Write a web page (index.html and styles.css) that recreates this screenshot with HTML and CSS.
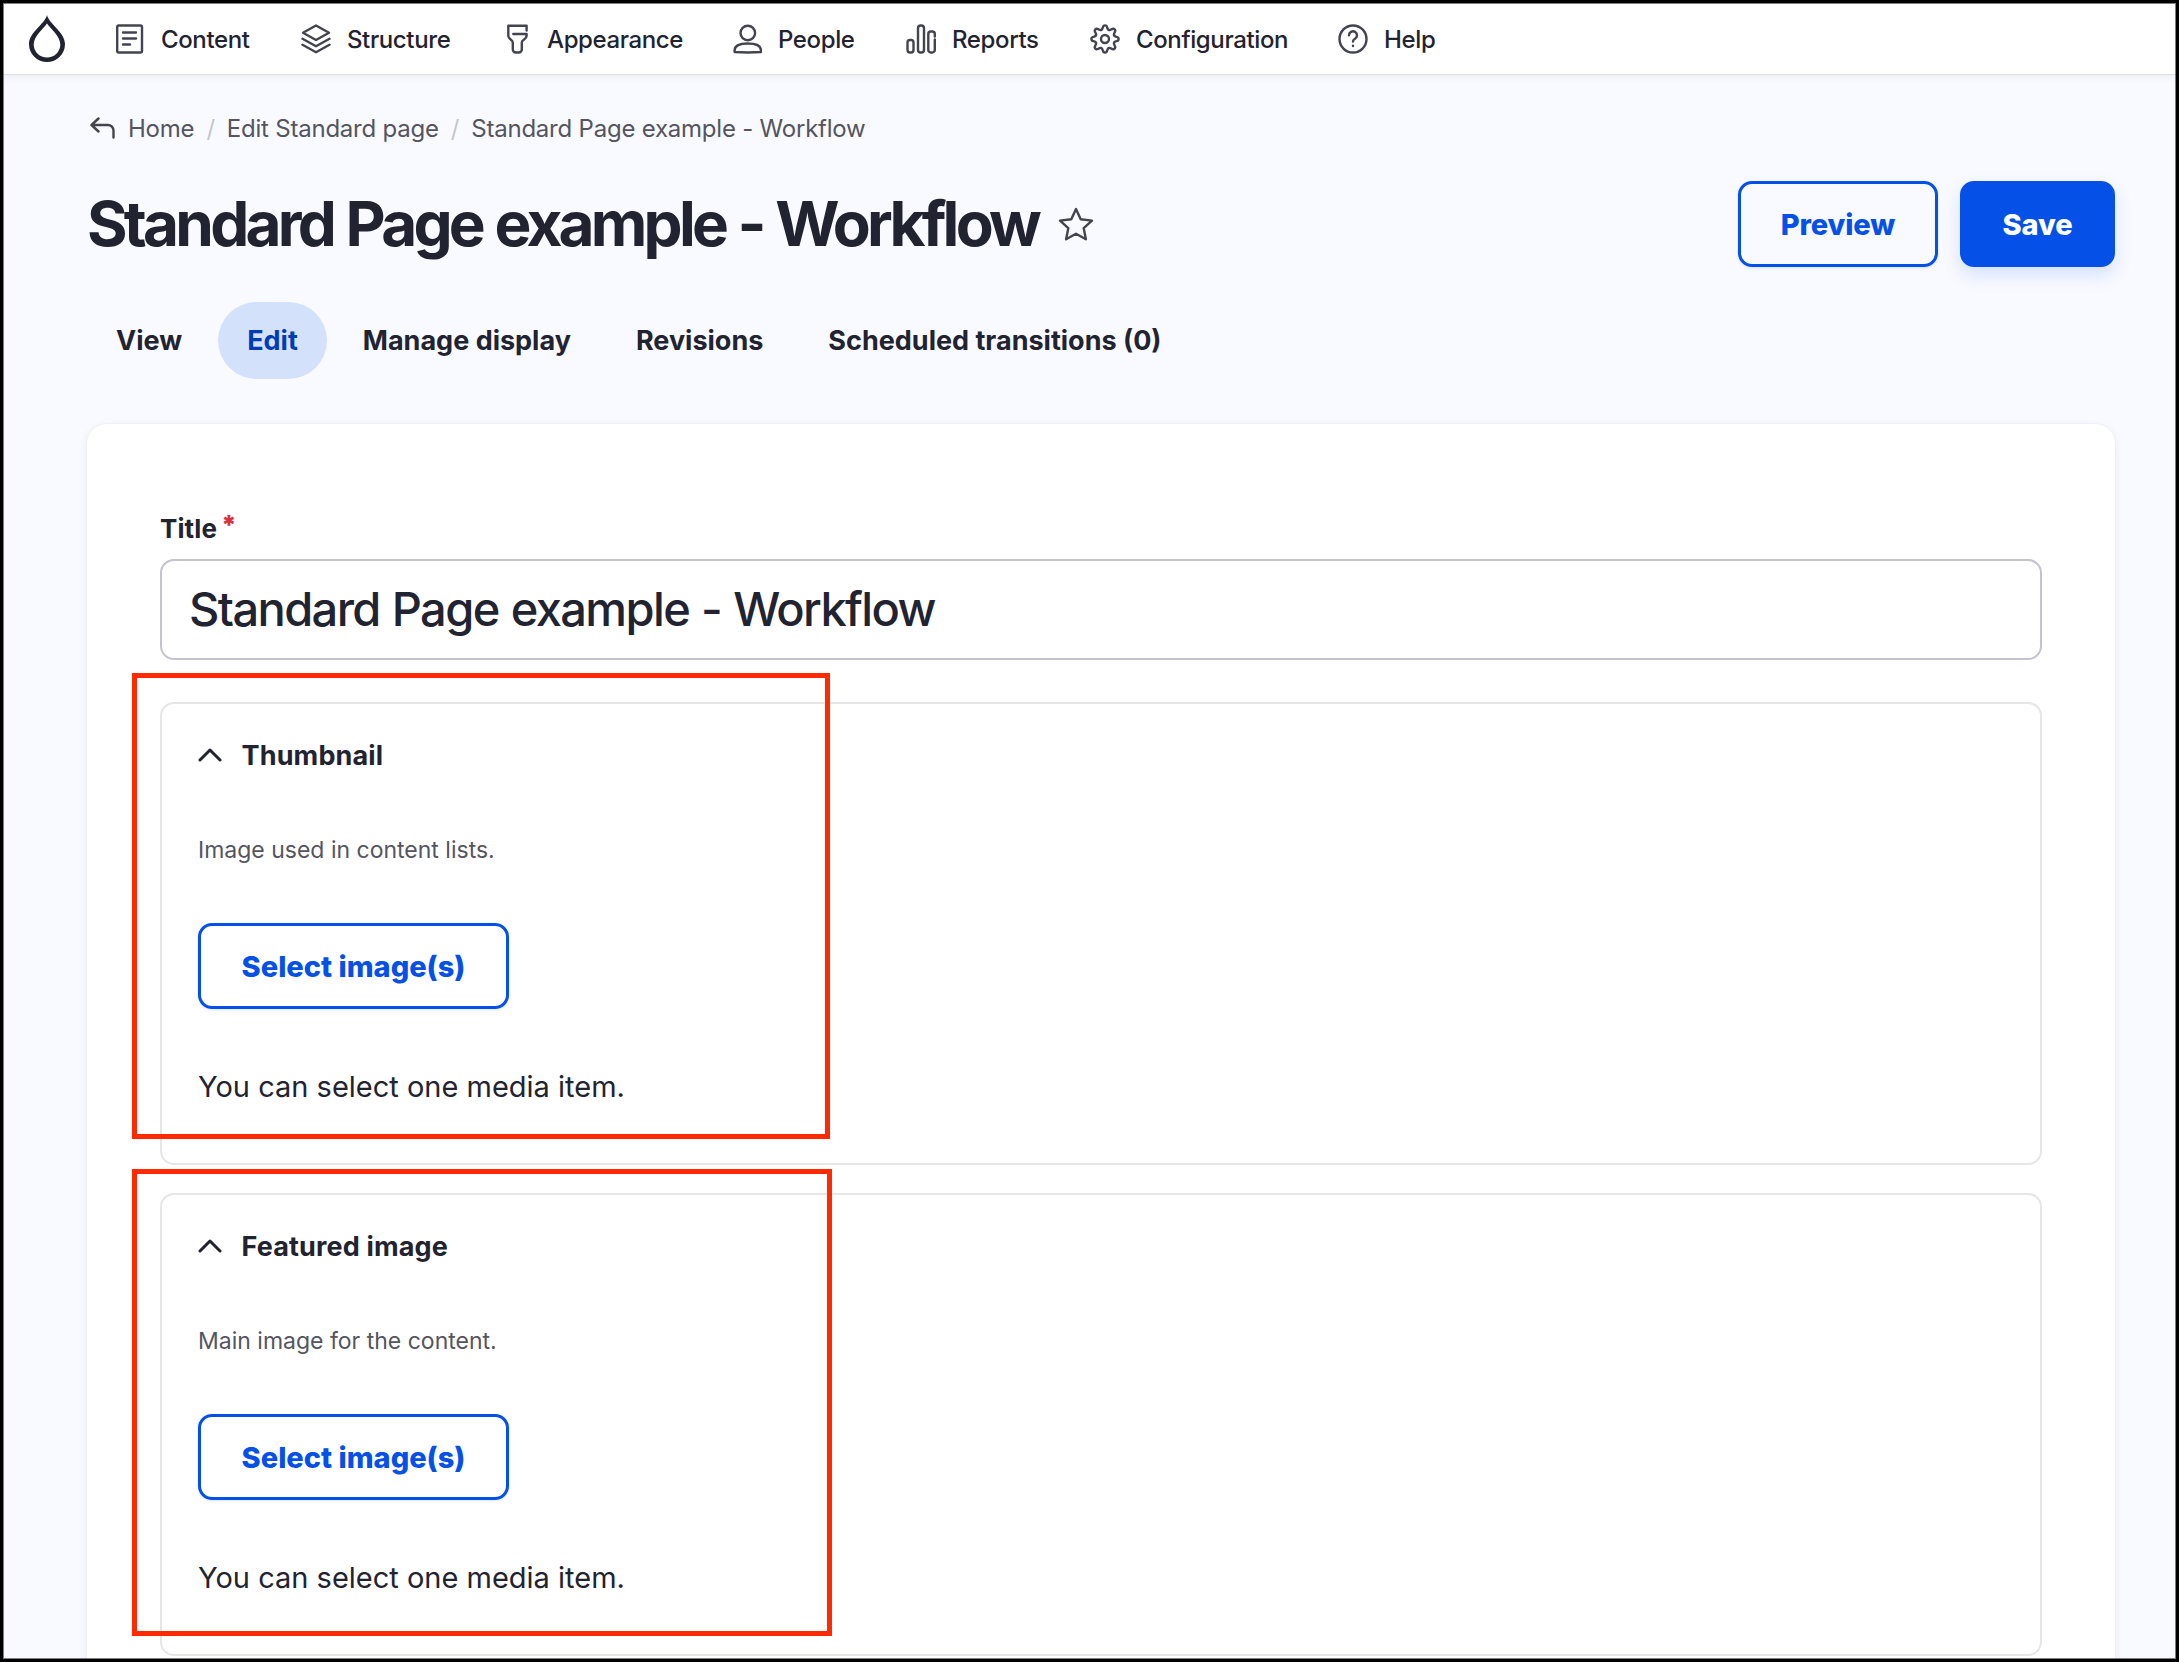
FILE: index.html
```
<!DOCTYPE html>
<html lang="en">
<head>
<meta charset="utf-8">
<title>Edit Standard page</title>
<link rel="stylesheet" href="styles.css">
</head>
<body>
<div class="frame">
  <nav class="toolbar">
    <a class="logo"><svg width="40" height="50" viewBox="0 0 40 50"><path fill-rule="evenodd" d="M19 0C17 9 1 17 1 29a18 18 0 0 0 36 0C37 17 21 9 19 0ZM19 8.500c4 6 13.300 12.500 13.300 21a13.300 13 0 0 1-26.600 0C5.700 21 15 14.500 19 8.500Z" fill="#222330"/></svg></a>
    <a class="tool t1"><svg class="ico" viewBox="0 0 30 30"><rect x="2.200" y="1.500" width="24.800" height="27" rx="1.500"/><path d="M8 8.500h13M8 14.500h13M8 20.500h7"/></svg><span>Content</span></a>
    <a class="tool t2"><svg class="ico" viewBox="0 0 30 30"><path d="M15 1.500 28 8.800 15 16 2 8.800Z"/><path d="M1.500 14.800 15 22.300 28.500 14.800M1.500 20.800 15 28.300 28.500 20.800"/></svg><span>Structure</span></a>
    <a class="tool t3"><svg class="ico" viewBox="-1.300 0 30 30"><path d="M24.300 6.500V1.800H6V12c0 3.500 4.500 3.500 4.500 6.500v7a3 3 0 0 0 3 3h3a3 3 0 0 0 3-3v-7c0-3 4.800-3 4.800-6.500V10H11"/></svg><span>Appearance</span></a>
    <a class="tool t4"><svg class="ico" viewBox="-0.800 0 30 30"><circle cx="15" cy="9" r="7.300"/><path d="M1.800 28v-1.500c0-4.500 4-7 13.200-7s13.200 2.500 13.200 7V28C20 28.600 10 28.600 1.800 28Z"/></svg><span>People</span></a>
    <a class="tool t5"><svg class="ico" viewBox="0 0 30 30"><rect x="1.500" y="16" width="6" height="12.500" rx="2.500"/><rect x="12" y="1.500" width="6" height="27" rx="2.700"/><path d="M28.800 12.500V10a2.500 2.500 0 0 0-2.500-2.500h-1.500A2.500 2.500 0 0 0 22.300 10v16a2.500 2.500 0 0 0 2.500 2.500h1.500a2.500 2.500 0 0 0 2.500-2.500V15.500"/></svg><span>Reports</span></a>
    <a class="tool t6"><svg class="ico" viewBox="-15 -15 30 30"><path id="tooth" d="M-3.750-9.050C-1.200-10.200-3.200-13.600 0-13.600S1.200-10.200 3.750-9.050"/><use href="#tooth" transform="rotate(45)"/><use href="#tooth" transform="rotate(90)"/><use href="#tooth" transform="rotate(135)"/><use href="#tooth" transform="rotate(180)"/><use href="#tooth" transform="rotate(225)"/><use href="#tooth" transform="rotate(270)"/><use href="#tooth" transform="rotate(315)"/><circle r="4"/></svg><span>Configuration</span></a>
    <a class="tool t7"><svg class="ico" viewBox="0 0 30 30"><circle cx="15" cy="15" r="13.500"/><path d="M11 11.300a4 4 0 1 1 6 3.500c-1.500.9-2 1.500-2 2.700M15 21.700v.4"/></svg><span>Help</span></a>
  </nav>
  <main class="main">
    <div class="crumbs">
      <svg class="back" viewBox="0 0 25 23"><path d="M8.500 1.500 1.500 8l7 6.500M1.500 8H18a5.500 5.500 0 0 1 5.500 5.500V20.500"/></svg>
      <span>Home</span><i>/</i><span>Edit Standard page</span><i>/</i><span>Standard Page example - Workflow</span>
    </div>
    <header class="head">
      <h1>Standard Page example - Workflow</h1>
      <svg class="star" viewBox="0 0 36 34"><path d="m18 2 4.700 10.300 11.300 1.300-8.300 7.600 2.200 11.100L18 26.700l-9.900 5.600 2.200-11.100L2 13.600l11.300-1.300Z"/></svg>
      <div class="actions"><a class="btn preview">Preview</a><a class="btn save">Save</a></div>
    </header>
    <nav class="tabs"><a>View</a><a class="on">Edit</a><a>Manage display</a><a>Revisions</a><a>Scheduled transitions (0)</a></nav>
    <section class="card">
      <label class="label"><span>Title</span><b>*</b></label>
      <div class="field"><span>Standard Page example - Workflow</span></div>
      <div class="group">
        <h2><svg class="chev" viewBox="0 0 24 14"><path d="M2 12 12 2l10 10"/></svg><span>Thumbnail</span></h2>
        <p class="desc">Image used in content lists.</p>
        <a class="btn select">Select image(s)</a>
        <p class="note">You can select one media item.</p>
        <div class="mark mark-a"></div>
      </div>
      <div class="group">
        <h2><svg class="chev" viewBox="0 0 24 14"><path d="M2 12 12 2l10 10"/></svg><span>Featured image</span></h2>
        <p class="desc">Main image for the content.</p>
        <a class="btn select">Select image(s)</a>
        <p class="note">You can select one media item.</p>
        <div class="mark mark-b"></div>
      </div>
    </section>
  </main>
</div>
</body>
</html>
```
FILE: styles.css
```
* { box-sizing: border-box; }
body { margin: 0; font-family: Inter, "Liberation Sans", sans-serif; color: #222330; }
h1, h2, p { margin: 0; }
span, h1, p, a { white-space: nowrap; }
.frame { position: relative; width: 2179px; height: 1662px; border: 3px solid #000; background: #f9faff; overflow: hidden; }
.frame::after { content: ""; position: absolute; inset: 0; border: 1px solid rgba(0, 0, 0, .5); pointer-events: none; }
.toolbar { height: 72px; display: flex; align-items: center; background: #fff; border-bottom: 1px solid #dfe0e4; box-shadow: 0 2px 8px rgba(0, 0, 20, .06); font-size: 24px; font-weight: 500; letter-spacing: -.38px; padding: 1px 0 0 25px; }
.logo { display: flex; width: 87px; padding-top: 1px; }
.tool { display: flex; align-items: center; gap: 16px; }
.t1 { width: 186px; }
.t2 { width: 200px; }
.t3 { width: 231px; }
.t4 { width: 174px; }
.t5 { width: 184px; }
.t6 { width: 248px; }
.ico { width: 30px; height: 30px; flex: none; }
.ico, .back, .star, .chev { fill: none; stroke: #43444f; stroke-width: 2.4; stroke-linecap: round; stroke-linejoin: round; }
.main { padding: 35px 61px 0 84px; }
.crumbs { display: flex; align-items: center; height: 36px; padding-left: 3px; font-size: 24px; letter-spacing: -.22px; color: #545560; }
.crumbs i { font-style: normal; color: #c5c6cc; margin: 0 12px; }
.back { width: 25px; height: 23px; margin-right: 13px; }
.head { display: flex; align-items: center; height: 86px; margin-top: 35px; }
h1 { font-size: 62px; font-weight: 700; letter-spacing: -3.75px; word-spacing: 1.5px; line-height: 80px; }
.star { width: 36px; height: 34px; margin-left: 20px; }
.actions { margin-left: auto; display: flex; gap: 22px; }
.btn { display: flex; align-items: center; justify-content: center; height: 86px; border: 3px solid #0550e6; border-radius: 14px; color: #0550e6; font-size: 29px; font-weight: 800; letter-spacing: -.15px; box-shadow: 0 1px 3px rgba(5, 80, 230, .15); }
.preview { width: 200px; }
.save { width: 155px; background: #0550e6; color: #fff; box-shadow: 0 8px 18px rgba(5, 80, 230, .15); }
.select { width: 311px; letter-spacing: 0; }
.tabs { display: flex; height: 77px; margin-top: 35px; gap: 6px; font-size: 27px; font-weight: 700; letter-spacing: 0; }
.tabs a { display: flex; align-items: center; padding: 0 29.5px; border-radius: 39px; }
.tabs a:first-child { padding-left: 29px; }
.tabs .on { background: #d4e1fb; color: #003cb4; }
.card { margin-top: 45px; height: 1300px; padding: 86px 73px 0; background: #fff; border-radius: 20px; box-shadow: 0 0 0 1px #f0f1f4, 0 2px 10px rgba(20, 30, 80, .07); }
.label { display: flex; height: 36px; align-items: center; font-size: 26px; font-weight: 700; letter-spacing: .1px; gap: 4px; }
.label b { color: #d8333c; margin-top: -8px; }
.field { margin-top: 13px; height: 101px; border: 2px solid #c4c5cc; border-radius: 14px; padding: 0 27px 2px; display: flex; align-items: center; font-size: 47px; font-weight: 500; letter-spacing: -1.6px; word-spacing: 1px; }
.group { position: relative; height: 463px; border: 2px solid #e6e6e8; border-radius: 14px; padding: 31px 36px; margin-top: 42px; }
.group + .group { margin-top: 28px; }
h2 { display: flex; align-items: center; height: 40px; gap: 19.5px; font-size: 27px; font-weight: 700; letter-spacing: .15px; }
.chev { width: 24px; height: 14px; stroke: #222330; stroke-width: 3; }
.desc { font-size: 23px; line-height: 30px; color: #545560; margin: 60px 0 58px; }
.note { font-size: 29px; line-height: 40px; margin-top: 58px; }
.mark { position: absolute; border: 5px solid #ff2a00; pointer-events: none; }
.mark-a { left: -30px; top: -31px; width: 698px; height: 466px; }
.mark-b { left: -30px; top: -26px; width: 700px; height: 467px; }
```
